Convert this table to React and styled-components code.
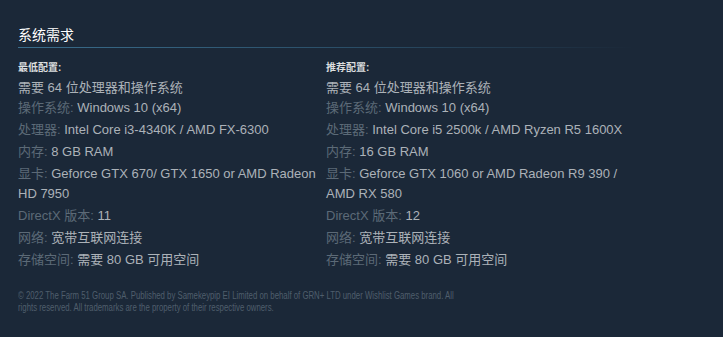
import React from 'react';
import styled, { createGlobalStyle } from 'styled-components';

const GlobalStyle = createGlobalStyle`
  html, body {
    margin: 0;
    padding: 0;
    background: #1b2838;
  }
  body {
    font-family: "Liberation Sans", Arial, "Noto Sans CJK SC", sans-serif;
  }
`;

const minimum = [
  ['操作系统:', 'Windows 10 (x64)'],
  ['处理器:', 'Intel Core i3-4340K / AMD FX-6300'],
  ['内存:', '8 GB RAM'],
  ['显卡:', 'Geforce GTX 670/ GTX 1650 or AMD Radeon HD 7950'],
  ['DirectX 版本:', '11'],
  ['网络:', '宽带互联网连接'],
  ['存储空间:', '需要 80 GB 可用空间'],
];

const recommended = [
  ['操作系统:', 'Windows 10 (x64)'],
  ['处理器:', 'Intel Core i5 2500k / AMD Ryzen R5 1600X'],
  ['内存:', '16 GB RAM'],
  ['显卡:', 'Geforce GTX 1060 or AMD Radeon R9 390 / AMD RX 580'],
  ['DirectX 版本:', '12'],
  ['网络:', '宽带互联网连接'],
  ['存储空间:', '需要 80 GB 可用空间'],
];

const ReqColumn = ({ title, items }) => (
  <Column>
    <ColTitle>{title}</ColTitle>
    <ReqList>
      <ReqItem $tight>需要 64 位处理器和操作系统</ReqItem>
      {items.map(([label, value]) => (
        <ReqItem key={label}>
          <Label>{label}</Label> {value}
        </ReqItem>
      ))}
    </ReqList>
  </Column>
);

export default function App() {
  return (
    <>
      <GlobalStyle />
      <Page>
        <Section>
          <Heading>系统需求</Heading>
          <Columns>
            <ReqColumn title="最低配置:" items={minimum} />
            <ReqColumn title="推荐配置:" items={recommended} />
          </Columns>
        </Section>
        <Legal>
          © 2022 The Farm 51 Group SA. Published by Samekeypip EI Limited on behalf of GRN+ LTD under
          Wishlist Games brand. All rights reserved. All trademarks are the property of their respective
          owners.
        </Legal>
      </Page>
    </>
  );
}

const Page = styled.div`
  width: 723px;
  height: 337px;
  box-sizing: border-box;
  padding: 24px 0 0 18px;
  background: #1b2838;
  overflow: hidden;
`;

const Section = styled.div`
  width: 616px;
`;

const Heading = styled.h2`
  margin: 0;
  padding-bottom: 4px;
  font-size: 14px;
  line-height: 20px;
  font-weight: normal;
  color: #ffffff;
  font-family: "Noto Sans CJK SC", sans-serif;
  background-image: linear-gradient(to right, #3a6d8c 0%, #2a4d66 55%, rgba(27, 40, 56, 0) 100%);
  background-repeat: no-repeat;
  background-position: left bottom;
  background-size: 100% 1px;
`;

const Columns = styled.div`
  display: grid;
  grid-template-columns: 302px 302px;
  column-gap: 6px;
  margin-top: 12px;
`;

const Column = styled.div`
  color: #acb2b8;
  font-size: 13px;
`;

const ColTitle = styled.div`
  font-size: 10px;
  line-height: 16px;
  font-weight: bold;
  color: #dcdedf;
`;

const ReqList = styled.ul`
  list-style: none;
  margin: 2px 0 0;
  padding: 0;
`;

const ReqItem = styled.li`
  line-height: 20px;
  margin-bottom: ${(p) => (p.$tight ? '0' : '2px')};
`;

const Label = styled.span`
  color: #5c6a77;
`;

const Legal = styled.p`
  width: 565px;
  margin: 18px 0 0;
  font-size: 10px;
  line-height: 12px;
  color: #4f5e6c;
  transform: scaleX(0.78);
  transform-origin: left top;
`;
